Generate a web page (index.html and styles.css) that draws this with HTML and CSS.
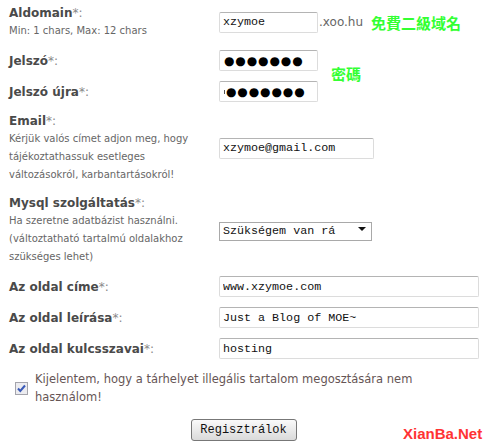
FILE: index.html
```html
<!DOCTYPE html>
<html lang="hu">

<head>
    <meta charset="UTF-8">
    <meta name="viewport" content="width=device-width, initial-scale=1.0">
    <title>Regisztráció</title>

    <link rel="stylesheet" href="styles.css">
</head>

<body>

    <div class="page">
        <form class="reg">
            <!-- Aldomain -->
            <div class="row">
                <div class="label"><b>Aldomain</b>*:<span class="hint">Min: 1 chars, Max: 12 chars</span></div>
                <div class="field">
                    <input type="text" class="text short" value="xzymoe">
                    <span class="suffix">.xoo.hu</span>
                    <span class="note">免費二級域名</span>
                </div>
            </div>

            <!-- Passwords -->
            <div class="row">
                <div class="label"><b>Jelszó</b>*:</div>
                <div class="field">
                    <div class="text short pass">●●●●●●●</div>
                </div>
            </div>
            <div class="row">
                <div class="label"><b>Jelszó újra</b>*:</div>
                <div class="field">
                    <div class="text short pass"><span class="caret"></span>●●●●●●●</div>
                </div>
            </div>

            <!-- Email -->
            <div class="row">
                <div class="label"><b>Email</b>*:<span class="hint">Kérjük valós címet adjon meg, hogy tájékoztathassuk esetleges változásokról, karbantartásokról!</span></div>
                <div class="field">
                    <input type="text" class="text mid" value="xzymoe@gmail.com">
                </div>
            </div>

            <!-- Mysql -->
            <div class="row">
                <div class="label"><b>Mysql szolgáltatás</b>*:<span class="hint">Ha szeretne adatbázist használni. (változtatható tartalmú oldalakhoz szükséges lehet)</span></div>
                <div class="field">
                    <span class="select-wrap">
                        <select class="pick">
                            <option>Szükségem van rá</option>
                        </select>
                    </span>
                </div>
            </div>

            <!-- Site info -->
            <div class="row">
                <div class="label"><b>Az oldal címe</b>*:</div>
                <div class="field">
                    <input type="text" class="text long" value="www.xzymoe.com">
                </div>
            </div>
            <div class="row">
                <div class="label"><b>Az oldal leírása</b>*:</div>
                <div class="field">
                    <input type="text" class="text long" value="Just a Blog of MOE~">
                </div>
            </div>
            <div class="row">
                <div class="label"><b>Az oldal kulcsszavai</b>*:</div>
                <div class="field">
                    <input type="text" class="text long" value="hosting">
                </div>
            </div>

            <!-- Terms -->
            <label class="terms">
                <svg class="check" width="13" height="13" viewBox="0 0 13 13">
                    <rect x="0.5" y="0.5" width="12" height="12" fill="#ececf0" stroke="#a4a4ac" />
                    <path d="M3 6.5 L5.3 9 L10 3.5" fill="none" stroke="#3a5ab8" stroke-width="2" />
                </svg>
                <span>Kijelentem, hogy a tárhelyet illegális tartalom megosztására nem használom!</span>
            </label>

            <div class="actions">
                <button type="button" class="submit">Regisztrálok</button>
            </div>
        </form>

        <span class="note note-pass">密碼</span>
        <span class="watermark">XianBa.Net</span>
    </div>

</body>

</html>
```

FILE: styles.css
```css
/* General Styles */
body {
    margin: 0;
    background: #fff;
    font-family: 'DejaVu Sans', Verdana, sans-serif;
    color: #555;
}

.page {
    position: relative;
    width: 489px;
    height: 445px;
    overflow: hidden;
}

.reg {
    display: flex;
    flex-direction: column;
    padding: 0 11px 0 9px;
    margin-top: -1px;
}

/* Form rows */
.row {
    display: grid;
    grid-template-columns: 210px 1fr;
    align-items: center;
    padding: 5px 0;
}

.label {
    font-size: 12px;
    line-height: 18px;
    color: #888;
}

.label b {
    color: #4a4a4a;
}

.hint {
    display: block;
    font-size: 10px;
    line-height: 18px;
    color: #666;
    padding-right: 16px;
}

.field {
    display: flex;
    align-items: center;
}

/* Inputs */
.text {
    box-sizing: border-box;
    height: 21px;
    margin: 0;
    padding: 0 3px;
    border: 1px solid #dcdcdc;
    border-top-color: #b4b4b4;
    border-radius: 2px;
    background: #fff;
    font-family: 'Liberation Mono', monospace;
    font-size: 11.7px;
    color: #111;
    outline: none;
}

.short {
    width: 99px;
}

.mid {
    width: 155px;
}

.long {
    width: 260px;
}

.pass {
    display: flex;
    align-items: center;
    padding-left: 4px;
    overflow: hidden;
    white-space: nowrap;
    font-family: 'DejaVu Sans', sans-serif;
    font-size: 12px;
    letter-spacing: 0.9px;
    color: #000;
}

.caret {
    width: 1px;
    height: 4px;
    margin-right: 1px;
    background: #555;
}

.suffix {
    margin-left: 1px;
    font-size: 12px;
    color: #666;
}

/* Green annotations */
.note {
    margin-left: 8px;
    font-family: 'Noto Sans CJK TC', sans-serif;
    font-size: 15px;
    font-weight: bold;
    color: #3f3;
}

.note-pass {
    position: absolute;
    left: 331px;
    top: 63px;
    margin: 0;
}

/* Select */
.select-wrap {
    position: relative;
    display: inline-block;
}

.select-wrap::after {
    content: "";
    position: absolute;
    right: 6px;
    top: 8px;
    border-left: 4px solid transparent;
    border-right: 4px solid transparent;
    border-top: 4px solid #111;
    pointer-events: none;
}

.pick {
    appearance: none;
    box-sizing: border-box;
    width: 153px;
    height: 19px;
    margin: 0;
    padding: 0 3px;
    border: 1px solid #a9a9a9;
    border-radius: 0;
    background: #fff;
    font-family: 'Liberation Mono', monospace;
    font-size: 11.7px;
    color: #111;
}

/* Terms */
.terms {
    display: flex;
    align-items: center;
    gap: 7px;
    margin-top: 6px;
    padding-left: 6px;
    font-size: 11.5px;
    line-height: 18px;
    color: #655;
}

.terms span {
    max-width: 400px;
}

.check {
    flex: none;
}

/* Submit */
.actions {
    display: flex;
    justify-content: center;
    margin-top: 13px;
}

.submit {
    height: 22px;
    width: 106px;
    padding: 0;
    border: 1px solid #777;
    border-radius: 3px;
    background: linear-gradient(#fafafa, #dadada);
    font-family: 'Liberation Mono', monospace;
    font-size: 12px;
    color: #111;
}

/* Watermark */
.watermark {
    position: absolute;
    left: 403px;
    top: 425px;
    font-family: 'Liberation Sans', Arial, sans-serif;
    font-size: 15px;
    font-weight: bold;
    color: #f33;
}
```
